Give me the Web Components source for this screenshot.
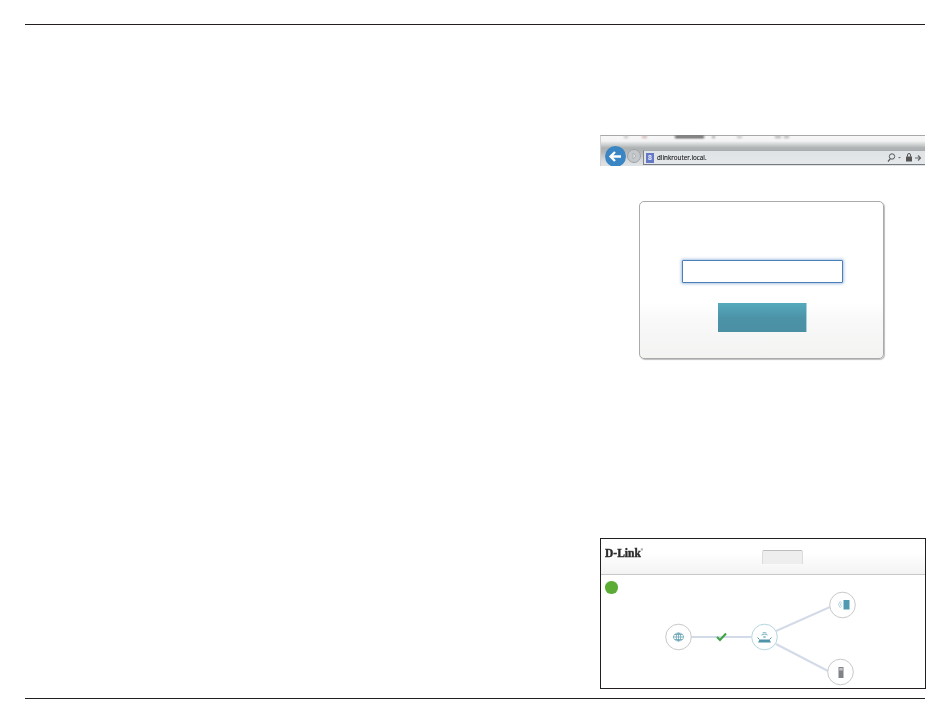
<!DOCTYPE html>
<html><head><meta charset="utf-8"><title>Router setup</title>
<style>html,body{margin:0;padding:0;background:#fff}body{font-family:"Liberation Sans",Arial,sans-serif}</style>
</head><body>
<doc-page>
  <browser-bar></browser-bar>
  <login-card></login-card>
  <router-ui></router-ui>
</doc-page>
<script>
function def(name, html){
  customElements.define(name, class extends HTMLElement{
    constructor(){super();this.attachShadow({mode:'open'}).innerHTML=html;}
  });
}
def('doc-page',`<style>
:host{display:block;width:950px;height:725px;box-sizing:border-box;padding:24px 25px 0;overflow:hidden}
.frame{height:675px;box-sizing:border-box;border-top:1px solid #231f20;border-bottom:1px solid #231f20;display:flex;flex-direction:column;align-items:flex-end}
.col{width:326px;margin-right:-1px;display:flex;flex-direction:column;padding-top:110px}
</style><div class="frame"><div class="col"><slot></slot></div></div>`);

def('browser-bar',`<style>
:host{display:block;width:325px;height:31px;position:relative;overflow:hidden;background:#fff}
.bar{position:absolute;inset:0;border-top:1px solid #a8a8a8;border-left:1px solid #d0d0d0;background:linear-gradient(#f8f8f8 0,#f3f3f3 5px,#d4d7d8 8px,#aeb1b2 12px,#b4b7b8 16px,#d5d9db 24px,#e2e6e8 31px)}
.smudges{position:absolute;left:0;right:0;top:1px;height:4px;filter:blur(.9px)}
.smudges i{position:absolute;top:0;height:2px;background:#999}
.url{position:absolute;left:43px;right:0;top:15px;height:15px;background:linear-gradient(#dfe3e6,#e4e8eb);border-left:1px solid #7f848a;border-top:1px solid #a9acae;border-bottom:1px solid #767b80;box-sizing:border-box;display:flex;align-items:center;gap:3px;padding-left:2px;filter:blur(.2px)}
.fav{width:8px;height:10px;background:#6478c4;color:#e8ecff;font:bold 7px/10px "Liberation Sans",sans-serif;text-align:center;flex:none;filter:blur(.3px)}
.txt{font:6.300px/12px "Open Sans","Liberation Sans",sans-serif;color:#111;-webkit-text-stroke:.1px #111;filter:blur(.25px)}
.back{position:absolute;left:5px;top:11px;width:21px;height:21px;border-radius:50%;background:#3a86c4;filter:blur(.2px)}
.fwd{position:absolute;left:27px;top:14px;width:14px;height:14px;box-sizing:border-box;border-radius:50%;background:#c4c8ca;border:1px solid #9ea2a4;filter:blur(.3px)}
svg{position:absolute;filter:blur(.3px)}
</style><div class="bar"></div>
<div class="smudges"><i style="left:24px;width:4px;background:#bbb"></i><i style="left:42px;width:5px;background:#c9a9a9"></i><i style="left:75px;width:29px;background:#333"></i><i style="left:112px;width:3px"></i><i style="left:137px;width:5px;background:#bbb"></i><i style="left:175px;width:6px;background:#aaa"></i><i style="left:184px;width:5px;background:#aaa"></i></div>
<div class="url"><span class="fav">8</span><span class="txt">dlinkrouter.local.</span></div>
<div class="fwd"></div><div class="back"></div>
<svg style="left:5px;top:11px" width="21" height="21" viewBox="0 0 21 21"><path d="M16 10.500H6M10 6l-4.500 4.500L10 15" fill="none" stroke="#fff" stroke-width="2.300"/></svg>
<svg style="left:27px;top:14px" width="14" height="14" viewBox="0 0 14 14"><path d="M6 4l3 3-3 3z" fill="#dcdfe0" stroke="#a5a9ab" stroke-width=".7"/></svg>
<svg style="left:287px;top:17px" width="36" height="11" viewBox="0 0 36 11"><circle cx="5" cy="4.500" r="2.700" fill="none" stroke="#555" stroke-width="1"/><path d="M3.200 6.800L1 9.500" stroke="#555" stroke-width="1.200"/><path d="M11 5h3l-1.500 1.500z" fill="#777"/><rect x="19" y="4.500" width="6" height="5" fill="#555"/><path d="M20.500 4.500V3a1.500 1.500 0 0 1 3 0v1.500" fill="none" stroke="#555"/><path d="M28 6h5M31 3.500L33.500 6 31 8.500" fill="none" stroke="#666" stroke-width="1.200"/></svg>`);

def('login-card',`<style>
:host{display:block;width:245px;height:158px;margin:35px 0 0 39px;box-sizing:border-box;border:1px solid #aaa;border-radius:5px;box-shadow:1px 1px 1px #bdbdbd;background:linear-gradient(#fff 0,#fff 65%,#f9f9f9 75%,#f3f3f2 100%);padding-top:58px}
.in{display:block;width:161px;height:23px;box-sizing:border-box;margin:0 0 0 42px;border:1px solid #4a7fb8;border-radius:1px;box-shadow:0 0 3px 1px #a9c3e3;background:#fff}
.btn{display:block;height:29px;width:88px;margin:20px 0 0 78px;background:linear-gradient(#56aabd 0,#4c93a8 50%,#4b8fa3 100%);border-right:1px solid #a8d0da}
</style><div class="in"></div><div class="btn"></div>`);

def('router-ui',`<style>
:host{display:block;width:326px;height:151px;margin-top:179px;box-sizing:border-box;border:1px solid #231f20;background:#fff;position:relative;overflow:hidden}
header{height:36px;box-sizing:border-box;border-bottom:1px solid #c6c8ca;background:linear-gradient(#fff 0,#fff 40%,#f3f3f3 100%);position:relative}
.logo{position:absolute;left:4px;top:4px;font:bold 11.500px/14px "Liberation Serif",serif;color:#2b2b2b;-webkit-text-stroke:.4px #2b2b2b;filter:blur(.2px)}
.logo sup{font-size:3px;vertical-align:6px;-webkit-text-stroke:0}
.tab{position:absolute;left:161px;top:11px;width:41px;height:14px;box-sizing:border-box;border:1px solid #dcdcdc;border-top-color:#bdbdbd;border-bottom:0;border-radius:2px 2px 0 0;background:#eeeeee}
.dot{position:absolute;left:4px;top:42px;width:12.500px;height:12.500px;border-radius:50%;background:#5aac34}
svg.net{position:absolute;left:0;top:0}
.ic{filter:blur(.3px)}
</style>
<header><span class="logo">D-Link<sup>®</sup></span><div class="tab"></div></header>
<div class="dot"></div>
<svg class="net" width="324" height="149" viewBox="0 0 324 149">
  <g stroke="#d3dbe8" stroke-width="2" fill="none">
    <path d="M90 98H150"/>
    <path d="M175 92L229 68"/>
    <path d="M175 105L227 132"/>
  </g>
  <path d="M116 98l3 3 6-6.500" fill="none" stroke="#3aa545" stroke-width="2"/>
  <g fill="#fff">
    <circle cx="77.500" cy="98" r="12.800" stroke="#c9c9c9"/>
    <circle cx="163.500" cy="98" r="12.800" stroke="#b5d6de"/>
    <circle cx="241.500" cy="66" r="12.800" stroke="#c9c9c9"/>
    <circle cx="239.500" cy="133" r="12.800" stroke="#c9c9c9"/>
  </g>
  <g class="ic" fill="none" stroke="#6aa5b7" stroke-width=".8" transform="translate(-.5 0)">
    <ellipse cx="78" cy="98" rx="5" ry="4"/><ellipse cx="78" cy="98" rx="2.300" ry="4"/><path d="M73 98h10M74 95.500h8M74 100.500h8M78 94v8"/>
  </g>
  <g class="ic" transform="translate(-.5 0)">
    <path d="M159 100.500h10l1.500 3h-13z" fill="#4f93a8"/>
    <path d="M157 98.500l2 2M171 98.500l-2 2" stroke="#4f93a8" stroke-width="1"/>
    <path d="M161 96q3-2 6 0M162 94q2-1 4 0" stroke="#6fa9ba" stroke-width=".9" fill="none"/>
    <ellipse cx="164" cy="98" rx="1.500" ry=".8" fill="#6fa9ba"/>
  </g>
  <g class="ic" transform="translate(-.5 0)">
    <rect x="243" y="61" width="6" height="9.500" fill="#4f9ab0"/>
    <path d="M240 62l-2 3.500 2 3.500M241 63.500l-1 2 1 2" fill="none" stroke="#8cbccb" stroke-width=".7"/>
  </g>
  <g class="ic" transform="translate(-.5 0)">
    <rect x="238" y="128" width="5" height="11" fill="#808285"/>
    <rect x="238.800" y="129" width="3.400" height="2.500" fill="#c2c4c6"/>
  </g>
</svg>`);
</script>
</body></html>
